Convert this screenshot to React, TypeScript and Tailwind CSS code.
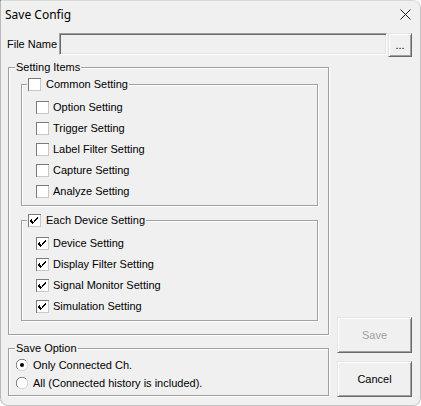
import React from "react";

const F = "font-['Liberation_Sans',Arial,sans-serif]";

function Check({ checked }: { checked?: boolean }) {
  return (
    <svg width="13" height="13" viewBox="0 0 13 13" className="block shrink-0" shapeRendering="crispEdges">
      <rect x="0" y="0" width="13" height="13" fill="#ffffff" />
      <path d="M0.5 13 V0.5 H13" stroke="#7a7a7a" fill="none" />
      <path d="M12.5 0.5 V12.5 H0.5" stroke="#c8c8c8" fill="none" />
      {checked && (
        <path d="M3 5 h1 v2 h1 v1 h1 v-2 h1 v-1 h1 v-1 h1 v-1 h1 v2 h-1 v1 h-1 v1 h-1 v1 h-1 v1 h-1 v1 h-1 v-1 h-1 v-1 h-1 v-1 h-1 z" fill="#000" />
      )}
    </svg>
  );
}

function Radio({ checked }: { checked?: boolean }) {
  return (
    <svg width="12" height="12" viewBox="0 0 12 12" className="block shrink-0">
      <circle cx="6" cy="6" r="5.5" fill="#ffffff" />
      <path d="M1.9 10.1 A5.5 5.5 0 0 1 10.1 1.9" stroke="#7a7a7a" fill="none" />
      <path d="M10.1 1.9 A5.5 5.5 0 0 1 1.9 10.1" stroke="#d4d4d4" fill="none" />
      {checked && <circle cx="6" cy="6" r="2" fill="#000" />}
    </svg>
  );
}

function Row({ label, checked }: { label: string; checked?: boolean }) {
  return (
    <div className="h-[21px] flex items-center gap-[4px]">
      <Check checked={checked} />
      <span className="leading-[13px]">{label}</span>
    </div>
  );
}

const groupCls =
  "m-0 p-0 border border-[#a0a0a0] shadow-[inset_1px_1px_0_#ffffff,1px_1px_0_#ffffff]";

function Group({
  legend,
  className,
  legendClass,
  bodyClass,
  children,
}: {
  legend: React.ReactNode;
  className?: string;
  legendClass?: string;
  bodyClass?: string;
  children: React.ReactNode;
}) {
  return (
    <fieldset className={`${groupCls} ${className ?? ""}`}>
      <legend className={`p-0 px-[1px] h-[13px] leading-[13px] bg-[#f0f0f0] ${legendClass ?? ""}`}>{legend}</legend>
      <div className={bodyClass}>{children}</div>
    </fieldset>
  );
}

function CheckLegend({ label, checked }: { label: string; checked?: boolean }) {
  return (
    <span className="flex items-center gap-[5px] h-[13px] leading-[13px]">
      <Check checked={checked} />
      <span>{label}</span>
    </span>
  );
}

const btn =
  "h-[36px] w-[75px] bg-[#f0f0f0] border border-t-[#e3e3e3] border-l-[#e3e3e3] border-r-[#696969] border-b-[#696969] shadow-[inset_1px_1px_0_#ffffff,inset_-1px_-1px_0_#a0a0a0] leading-[13px]";

export default function App() {
  return (
    <div
      className={`w-[421px] h-[406px] bg-[#f0f0f0] rounded-tr-[8px] rounded-b-[8px] border-l border-dotted border-[#808080] shadow-[inset_0_1px_0_#d9d9d9,inset_-1px_0_0_#c4c4c4,inset_0_-1px_0_#c4c4c4] flex flex-col overflow-hidden text-black ${F} text-[11px]`}
    >
      {/* Title bar */}
      <div className="h-[29px] flex items-center justify-between pl-[4px] pr-[10px]">
        <span className="font-['Noto_Sans',sans-serif] text-[12px] leading-[16px]">Save Config</span>
        <svg width="11" height="11" viewBox="0 0 11 11" className="block">
          <path d="M0.5 0.5 L10.5 10.5 M10.5 0.5 L0.5 10.5" stroke="#1a1a1a" strokeWidth="1" />
        </svg>
      </div>

      {/* File name row */}
      <div className="mt-[4px] flex items-start pl-[6px]">
        <div className="w-[52px] h-[22px] flex items-center">File Name</div>
        <div className="w-[328px] h-[22px] bg-[#f0f0f0] border border-t-[#a0a0a0] border-l-[#a0a0a0] border-r-[#ffffff] border-b-[#ffffff] shadow-[inset_1px_1px_0_#696969,inset_-1px_-1px_0_#e3e3e3]" />
        <button className="ml-[1px] w-[24px] h-[24px] bg-[#f0f0f0] border border-t-[#e3e3e3] border-l-[#e3e3e3] border-r-[#696969] border-b-[#696969] shadow-[inset_1px_1px_0_#ffffff,inset_-1px_-1px_0_#a0a0a0] flex items-end justify-center pb-[5px] leading-[11px]">
          ...
        </button>
      </div>

      {/* Main */}
      <div className="mt-[4px] flex pl-[7px]">
        <div className="w-[321px] flex flex-col mb-[1px]">
          <Group legend="Setting Items" legendClass="ml-[6px]" bodyClass="pl-[12px] pb-[13px]">
            <Group
              legend={<CheckLegend label="Common Setting" />}
              className="w-[297px] mt-[4px]"
              legendClass="ml-[5px]"
              bodyClass="pl-[14px] pt-[6px] pb-[3px]"
            >
              <Row label="Option Setting" />
              <Row label="Trigger Setting" />
              <Row label="Label Filter Setting" />
              <Row label="Capture Setting" />
              <Row label="Analyze Setting" />
            </Group>

            <Group
              legend={<CheckLegend label="Each Device Setting" checked />}
              className="w-[297px] mt-[8px]"
              legendClass="ml-[5px]"
              bodyClass="pl-[14px] pt-[6px] pb-[3px]"
            >
              <Row label="Device Setting" checked />
              <Row label="Display Filter Setting" checked />
              <Row label="Signal Monitor Setting" checked />
              <Row label="Simulation Setting" checked />
            </Group>
          </Group>

          <Group legend="Save Option" className="mt-[7px]" legendClass="ml-[6px]" bodyClass="pl-[7px] pt-[1px] pb-[3px]">
            <div className="h-[18px] flex items-center gap-[5px]">
              <Radio checked />
              <span className="leading-[13px]">Only Connected Ch.</span>
            </div>
            <div className="h-[18px] flex items-center gap-[5px]">
              <Radio />
              <span className="leading-[13px]">All (Connected history is included).</span>
            </div>
          </Group>
        </div>

        <div className="ml-[8px] w-[75px] flex flex-col justify-end gap-[8px]">
          <button className={`${btn} text-[#a0a0a0]`}>Save</button>
          <button className={btn}>Cancel</button>
        </div>
      </div>
    </div>
  );
}
